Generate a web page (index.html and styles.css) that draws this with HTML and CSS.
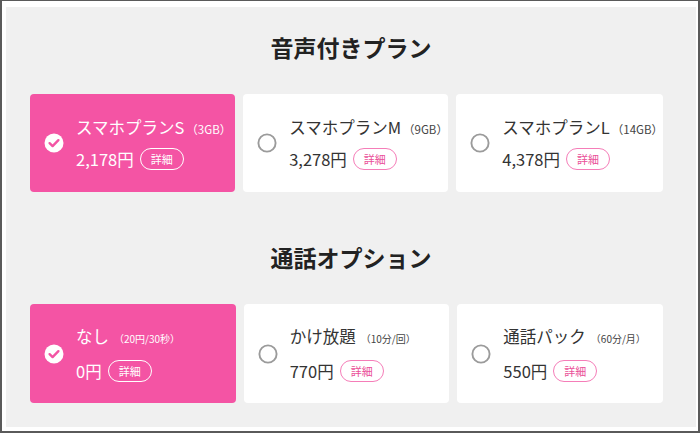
FILE: index.html
```html
<!DOCTYPE html>
<html lang="ja">
<head>
<meta charset="utf-8">
<link rel="stylesheet" href="styles.css">
</head>
<body>
<div class="frame">
  <div class="panel">
    <section class="section">
      <h2 class="heading">音声付きプラン</h2>
      <div class="grid">
        <div class="card selected">
          <svg class="mark" width="20" height="20" viewBox="0 0 20 20"><circle cx="10" cy="10" r="9.5" fill="#fff"/><path d="M5.6 10.2 L8.6 13.1 L14.4 7.2" fill="none" stroke="#f354a4" stroke-width="2.4" stroke-linecap="round" stroke-linejoin="round"/></svg>
          <div class="info">
            <div class="name">スマホプランS<span class="note n1">（3GB）</span></div>
            <div class="price-row"><span class="price">2,178円</span><span class="pill">詳細</span></div>
          </div>
        </div>
        <div class="card">
          <svg class="mark" width="20" height="20" viewBox="0 0 20 20"><circle cx="10" cy="10" r="8.6" fill="#fff" stroke="#9b9b9b" stroke-width="1.9"/></svg>
          <div class="info">
            <div class="name">スマホプランM<span class="note n1">（9GB）</span></div>
            <div class="price-row"><span class="price">3,278円</span><span class="pill">詳細</span></div>
          </div>
        </div>
        <div class="card">
          <svg class="mark" width="20" height="20" viewBox="0 0 20 20"><circle cx="10" cy="10" r="8.6" fill="#fff" stroke="#9b9b9b" stroke-width="1.9"/></svg>
          <div class="info">
            <div class="name">スマホプランL<span class="note n1">（14GB）</span></div>
            <div class="price-row"><span class="price">4,378円</span><span class="pill">詳細</span></div>
          </div>
        </div>
      </div>
    </section>
    <section class="section second">
      <h2 class="heading">通話オプション</h2>
      <div class="grid">
        <div class="card selected tall">
          <svg class="mark" width="20" height="20" viewBox="0 0 20 20"><circle cx="10" cy="10" r="9.5" fill="#fff"/><path d="M5.6 10.2 L8.6 13.1 L14.4 7.2" fill="none" stroke="#f354a4" stroke-width="2.4" stroke-linecap="round" stroke-linejoin="round"/></svg>
          <div class="info">
            <div class="name">なし<span class="note n2">（20円/30秒）</span></div>
            <div class="price-row"><span class="price">0円</span><span class="pill">詳細</span></div>
          </div>
        </div>
        <div class="card tall">
          <svg class="mark" width="20" height="20" viewBox="0 0 20 20"><circle cx="10" cy="10" r="8.6" fill="#fff" stroke="#9b9b9b" stroke-width="1.9"/></svg>
          <div class="info">
            <div class="name">かけ放題<span class="note n2">（10分/回）</span></div>
            <div class="price-row"><span class="price">770円</span><span class="pill">詳細</span></div>
          </div>
        </div>
        <div class="card tall">
          <svg class="mark" width="20" height="20" viewBox="0 0 20 20"><circle cx="10" cy="10" r="8.6" fill="#fff" stroke="#9b9b9b" stroke-width="1.9"/></svg>
          <div class="info">
            <div class="name">通話パック<span class="note n2">（60分/月）</span></div>
            <div class="price-row"><span class="price">550円</span><span class="pill">詳細</span></div>
          </div>
        </div>
      </div>
    </section>
  </div>
</div>
</body>
</html>
```
FILE: styles.css
```css
html, body {
  margin: 0;
  padding: 0;
  background: #fff;
}
body {
  font-family: "Noto Sans CJK JP", "Noto Sans", sans-serif;
  color: #333;
}
.frame {
  box-sizing: border-box;
  width: 700px;
  height: 433px;
  border-style: solid;
  border-color: #5a5a5a;
  border-width: 1px 2px 2px 2px;
  padding: 6px 2px 4px 4px;
}
.panel {
  background: #f0f0f0;
  height: 100%;
  box-sizing: border-box;
  padding: 25px 33px 0 24px;
}
.section.second {
  margin-top: 50px;
}
.heading {
  margin: 0 0 32px 0;
  font-size: 23px;
  line-height: 30px;
  font-weight: bold;
  text-align: center;
  color: #222;
  padding-left: 9px;
}
.grid {
  display: grid;
  grid-template-columns: repeat(3, 1fr);
  gap: 8px;
}
.card {
  height: 98px;
  background: #fff;
  border-radius: 4px;
  display: flex;
  align-items: center;
  box-sizing: border-box;
  padding-left: 14px;
}
.card.tall {
  height: 99px;
}
.card.selected {
  background: #f454a4;
  color: #fff;
}
.mark {
  flex: none;
  margin-right: 12px;
}
.info {
  display: flex;
  flex-direction: column;
  gap: 8px;
}
.card.tall .info {
  gap: 10px;
}
.name {
  font-size: 16.5px;
  line-height: 22px;
  white-space: nowrap;
}
.note {
  font-size: 11.5px;
  color: #444;
  margin-left: 2px;
}
.note.n2 {
  font-size: 10px;
  margin-left: 5px;
}
.card.selected .note {
  color: #fff;
}
.price-row {
  display: flex;
  align-items: center;
}
.price {
  font-size: 16.5px;
  line-height: 22px;
}
.pill {
  box-sizing: border-box;
  height: 22px;
  width: 44px;
  margin-left: 6px;
  border: 1px solid #f57db8;
  border-radius: 11px;
  color: #ea4f98;
  font-size: 11px;
  line-height: 20px;
  text-align: center;
}
.card.selected .pill {
  border-color: #fff;
  color: #fff;
}
```
